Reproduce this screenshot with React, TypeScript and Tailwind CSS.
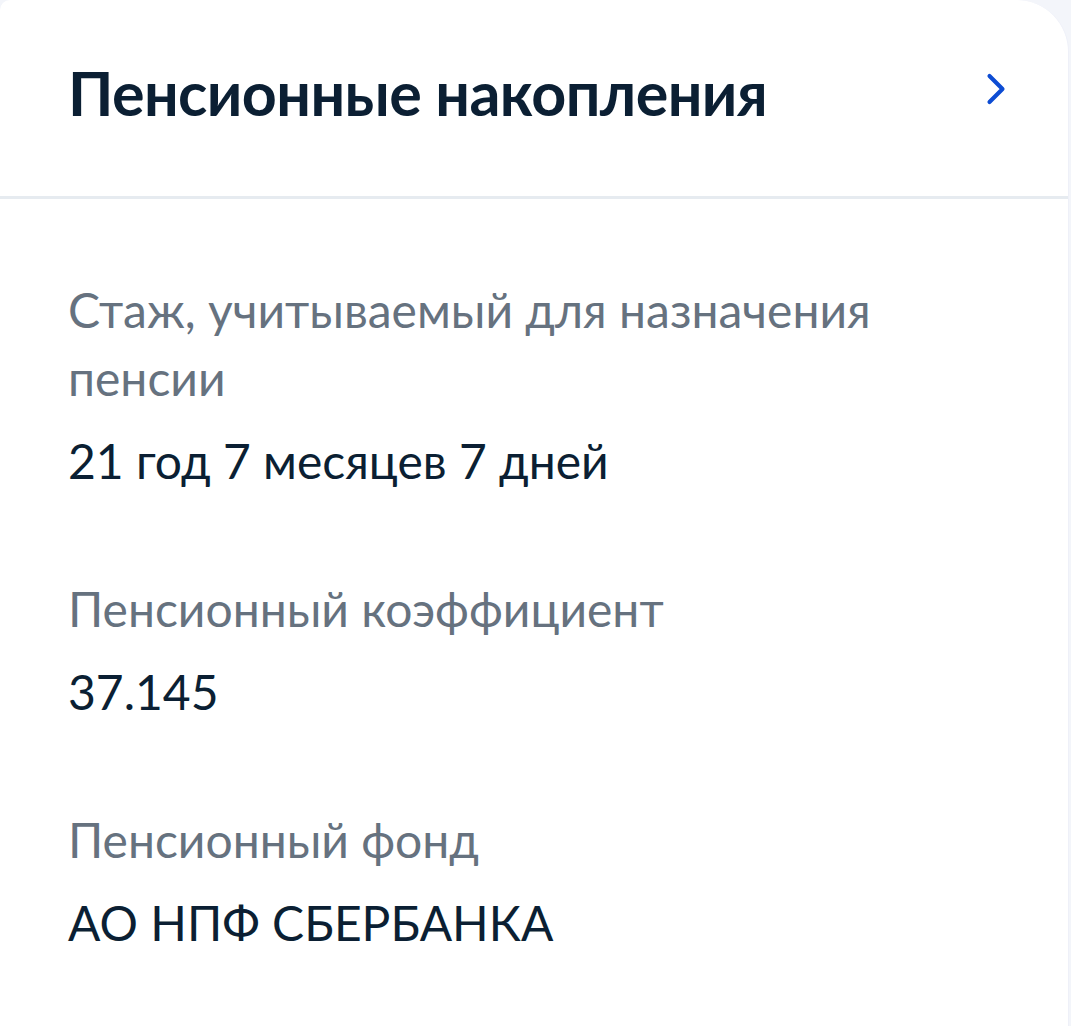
import { ChevronRight } from "lucide-react";

const ITEMS = [
  { label: "Стаж, учитываемый для назначения пенсии", value: "21 год 7 месяцев 7 дней" },
  { label: "Пенсионный коэффициент", value: "37.145" },
  { label: "Пенсионный фонд", value: "АО НПФ СБЕРБАНКА" },
];

export default function App() {
  return (
    <div className="min-h-[1026px] bg-[#f3f5fa] font-['Lato',sans-serif]">
      <div className="bg-white rounded-tl-[10px] rounded-tr-[52px] mr-[2px] min-h-[1026px] border-r border-[#eef0f8]">
        {/* Header */}
        <div className="flex items-center justify-between h-[199px] pl-[68px] pr-[46px] border-b-[3px] border-[#e6ebf0]">
          <h2 className="mb-[12px] text-[61px] font-bold leading-none text-[#0b1f33] tracking-[-0.6px]">
            Пенсионные накопления
          </h2>
          <ChevronRight className="w-[52px] h-[52px] text-[#0d4cd3] mb-[18px]" strokeWidth={1.9} />
        </div>

        {/* Details */}
        <div className="pl-[68px] pt-[77px] pr-[150px]">
          {ITEMS.map((item, i) => (
            <div key={item.label} className={i > 0 ? "mt-[80px]" : ""}>
              <div className="text-[48px] leading-[68px] text-[#66727f]">{item.label}</div>
              <div className="mt-[15px] text-[48px] leading-[68px] text-[#0b1f33]">{item.value}</div>
            </div>
          ))}
        </div>
      </div>
    </div>
  );
}
